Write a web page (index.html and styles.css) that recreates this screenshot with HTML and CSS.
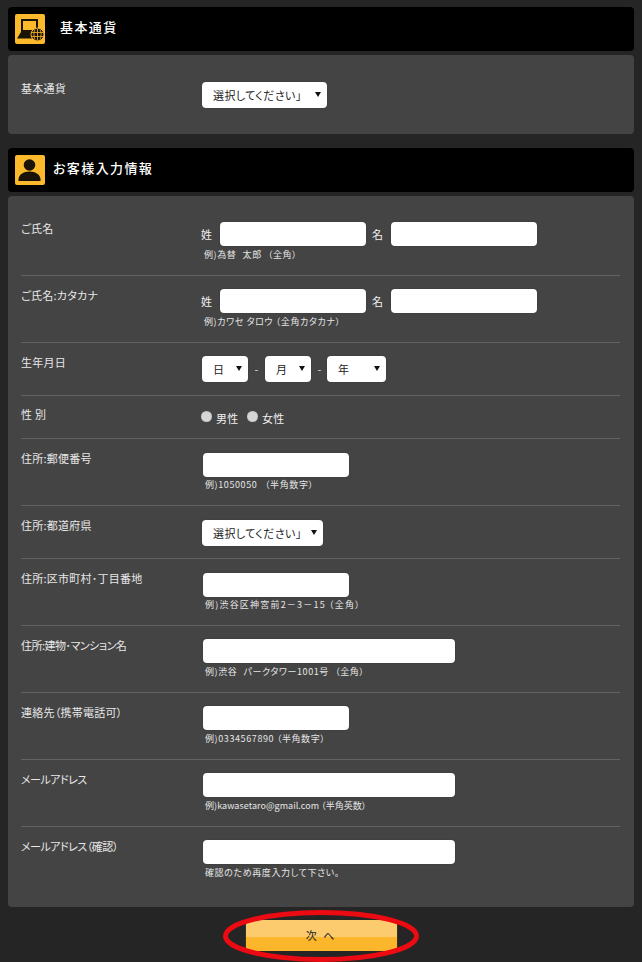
FILE: index.html
```html
<!DOCTYPE html>
<html lang="ja">
<head>
<meta charset="utf-8">
<title>お客様入力情報</title>
<link rel="stylesheet" href="styles.css">
</head>
<body>
<main class="page">
  <header class="head">
    <span class="icon">
      <svg viewBox="0 0 30 30" width="30" height="30">
        <path fill="none" stroke="#1a1408" stroke-width="2" d="M7 6h15v11H7z"/>
        <path fill="#1a1408" d="M6 18h15v6.500H2z"/>
        <circle cx="22.500" cy="20.500" r="6.500" fill="#1a1408" stroke="#fdb92c" stroke-width="1"/>
        <path fill="none" stroke="#fdb92c" stroke-width=".8" d="M16.500 18.500h12M16.500 22.500h12M22.500 14.500v12M20 15.500c-1.500 3-1.500 7 0 10M25 15.500c1.500 3 1.500 7 0 10"/>
      </svg>
    </span>
    <h2 class="head-title head-title-wide">基本通貨</h2>
  </header>
  <section class="panel panel-first">
    <div class="row row-single">
      <div class="label">基本通貨</div>
      <div class="select select-currency"><span>選択してください｣</span></div>
    </div>
  </section>

  <header class="head head-second">
    <span class="icon">
      <svg viewBox="0 0 30 30" width="30" height="30">
        <circle cx="14.500" cy="10" r="5.800" fill="#1a1408"/>
        <path fill="#1a1408" d="M3.500 26v-1.500c0-5 5-8 11-8s11 3 11 8V26z"/>
      </svg>
    </span>
    <h2 class="head-title">お客様入力情報</h2>
  </header>
  <section class="panel">
    <div class="row row-top">
      <div class="label">ご氏名</div>
      <div>
        <div class="names">
          <span class="tag">姓</span><span class="input"></span>
          <span class="tag tag-mei">名</span><span class="input"></span>
        </div>
        <p class="note note-gap">例)為替 太郎 （全角）</p>
      </div>
    </div>
    <div class="row row-tight">
      <div class="label">ご氏名:カタカナ</div>
      <div>
        <div class="names">
          <span class="tag">姓</span><span class="input"></span>
          <span class="tag tag-mei">名</span><span class="input"></span>
        </div>
        <p class="note">例)カワセ タロウ （全角カタカナ）</p>
      </div>
    </div>
    <div class="row row-single row-date">
      <div class="label">生年月日</div>
      <div class="dates">
        <div class="select select-date"><span>日</span></div>
        <span class="dash">-</span>
        <div class="select select-date"><span>月</span></div>
        <span class="dash">-</span>
        <div class="select select-year"><span>年</span></div>
      </div>
    </div>
    <div class="row row-radio">
      <div class="label">性 別</div>
      <div class="radios">
        <span class="radio"></span><span class="radio-text">男性</span>
        <span class="radio"></span><span class="radio-text">女性</span>
      </div>
    </div>
    <div class="row">
      <div class="label">住所:郵便番号</div>
      <div class="field"><span class="input"></span><p class="note note-gap-one">例)1050050 （半角数字）</p></div>
    </div>
    <div class="row row-single">
      <div class="label">住所:都道府県</div>
      <div class="select select-pref"><span>選択してください｣</span></div>
    </div>
    <div class="row">
      <div class="label">住所:区市町村･丁目番地</div>
      <div class="field"><span class="input"></span><p class="note note-spaced">例)渋谷区神宮前2－3－15 （全角）</p></div>
    </div>
    <div class="row row-tight">
      <div class="label label-kana">住所:建物･マンション名</div>
      <div class="field"><span class="input input-long"></span><p class="note note-gap">例)渋谷 パークタワー1001号 （全角）</p></div>
    </div>
    <div class="row row-tight">
      <div class="label">連絡先（携帯電話可）</div>
      <div class="field"><span class="input"></span><p class="note">例)0334567890 （半角数字）</p></div>
    </div>
    <div class="row row-tight">
      <div class="label label-kana">メールアドレス</div>
      <div class="field"><span class="input input-long"></span><p class="note note-compact">例)kawasetaro@gmail.com （半角英数）</p></div>
    </div>
    <div class="row row-tight row-last">
      <div class="label label-kana">メールアドレス（確認）</div>
      <div class="field"><span class="input input-long"></span><p class="note">確認のため再度入力して下さい。</p></div>
    </div>
  </section>

  <div class="actions">
    <div class="next">次 へ</div>
    <svg class="ring" viewBox="0 0 198 52" width="198" height="52">
      <ellipse cx="99" cy="26" rx="95.500" ry="23.500" fill="none" stroke="#ec0b12" stroke-width="5"/>
    </svg>
  </div>
</main>
</body>
</html>
```

FILE: styles.css
```css
* { box-sizing: border-box; }
html, body { margin: 0; padding: 0; }
body {
  background: #252525;
  color: #f0f0f0;
  font-family: "Noto Sans CJK JP", "Noto Sans", sans-serif;
  font-size: 11px;
  font-feature-settings: "palt";
}
.page {
  width: 642px;
  height: 962px;
  padding: 7px 8px 0;
  overflow: hidden;
}
.head {
  height: 44px;
  background: #000;
  border-radius: 4px;
  display: flex;
  align-items: center;
  padding-left: 7px;
  margin-bottom: 4px;
}
.head-second { margin-top: 14px; }
.icon {
  width: 30px;
  height: 30px;
  background: #fdb92c;
  border-radius: 2px;
  display: block;
  flex: none;
}
.icon svg { display: block; }
.head-title {
  margin: -5px 0 0 8px;
  font-size: 13px;
  font-weight: 500;
  letter-spacing: 1.400px;
  color: #fff;
}
.head-title-wide { margin-left: 15px; }
.panel {
  background: #444;
  border-radius: 4px;
  padding: 0 14px 0 13px;
}
.panel-first { height: 79px; }
.panel-first .row { padding-top: 27px; border-bottom: 0; }
.row {
  display: grid;
  grid-template-columns: 181px 1fr;
  align-items: start;
  padding: 14px 0 13px;
  border-bottom: 1px solid #626262;
}
.row-top { padding-top: 26px; }
.row-tight { padding-top: 13px; }
.row-single { padding-bottom: 12px; }
.row-date { padding: 13px 0 13px; }
.row-radio { height: 43px; padding: 0; }
.row-last { padding-bottom: 27px; border-bottom: 0; }
.label {
  margin-top: -2px;
  line-height: 14px;
  color: #e8e8e8;
  letter-spacing: .25px;
  white-space: nowrap;
}
.panel-first .label, .row-top .label, .row-tight .label, .row-date .label { margin-top: -1px; }
.row-radio .label { margin-top: 0; padding-top: 11px; }
.label-kana { letter-spacing: -.5px; }
.names { display: flex; align-items: center; height: 24px; }
.tag { width: 18px; font-size: 11px; line-height: 24px; flex: none; margin-left: -1px; }
.tag-mei { width: 19px; margin-left: 6px; }
.input {
  display: block;
  width: 146px;
  height: 24px;
  background: #fff;
  border-radius: 4px;
  box-shadow: 0 0 1px #222;
  flex: none;
}
.names .input:nth-child(2) { margin-left: 1px; }
.input-long { width: 252px; }
.field { padding-left: 1px; }
.note {
  margin: 1px 0 0 2px;
  font-size: 9px;
  line-height: 14px;
  letter-spacing: .6px;
  color: #e6e6e6;
  white-space: nowrap;
}
.row-top .note, .row-tight .note { margin-top: 2px; }
.note-gap { word-spacing: 3.500px; }
.note-gap-one { word-spacing: 5px; }
.note-spaced { letter-spacing: 1.200px; }
.note-compact { letter-spacing: .05px; }
.select {
  position: relative;
  height: 26px;
  background: #fff;
  border-radius: 4px;
  color: #222;
  line-height: 26px;
  padding-left: 11px;
  box-shadow: 0 0 1px #222;
  letter-spacing: .4px;
}
.select::after {
  content: "";
  position: absolute;
  right: 6px;
  top: 10px;
  border-style: solid;
  border-width: 5px 3px 0;
  border-color: #111 transparent transparent;
}
.select-currency { width: 125px; }
.select-pref { width: 121px; }
.select-date { width: 46px; }
.select-year { width: 59px; margin-left: -1px; }
.dates { display: flex; align-items: center; }
.dash { width: 17px; text-align: center; color: #ddd; }
.radios { display: flex; align-items: center; padding-top: 15px; }
.radio {
  width: 11px;
  height: 11px;
  border-radius: 50%;
  background: #d6d6d6;
  box-shadow: inset 0 0 1px #888;
  margin: -3px 4px 0 -1px;
  flex: none;
}
.radio-text { line-height: 14px; letter-spacing: .3px; width: 32px; flex: none; }
.actions {
  position: relative;
  width: 153px;
  height: 31px;
  margin: 13px auto 0;
}
.next {
  height: 31px;
  background: linear-gradient(#fbcb6e 0 17px, #fbb62b 17px);
  border-left: 1px solid #3a3020;
  border-right: 1px solid #3a3020;
  color: #222;
  text-align: center;
  line-height: 31px;
  letter-spacing: 2px;
}
.ring {
  position: absolute;
  left: -23px;
  top: -10px;
  display: block;
}
```
